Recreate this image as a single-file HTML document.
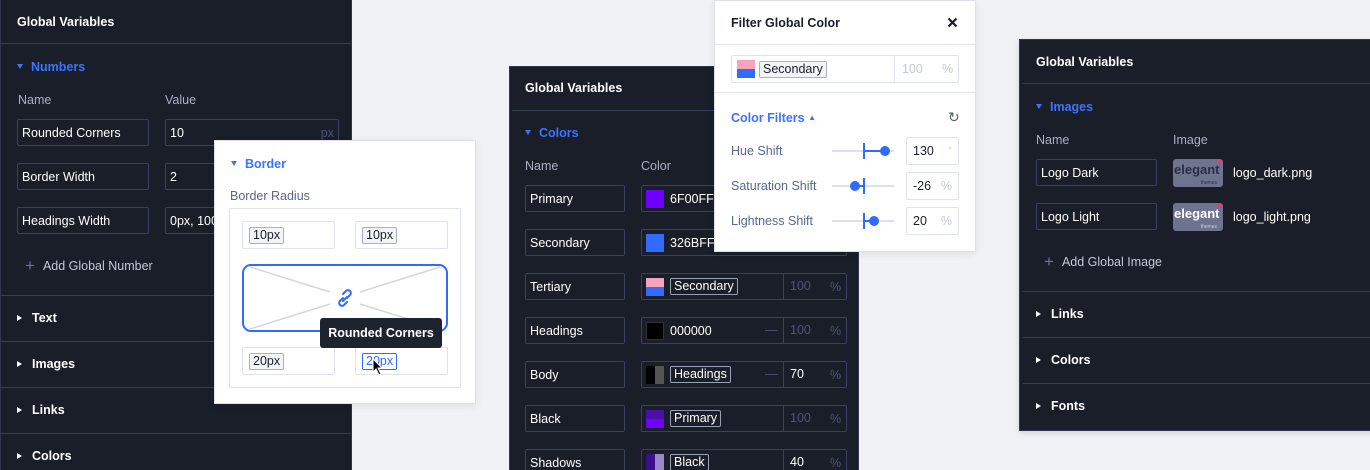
<!DOCTYPE html>
<html style="overflow:hidden;height:470px"><head><meta charset="utf-8"><style>
*{box-sizing:border-box;margin:0;padding:0}
body{width:1370px;height:470px;background:#f1f2f5;position:relative;overflow:hidden;font-family:"Liberation Sans",sans-serif;font-size:13px}
.a{position:absolute}
.dark{background:#1a1e29;border:1px solid #30364b}
.hd{color:#fff;font-weight:bold;font-size:12.5px;white-space:nowrap}
.ln{height:1px;background:#363d58}
.blue{color:#3b74ff;font-weight:bold;font-size:12.5px;white-space:nowrap}
.lab{color:#aab0c4;font-size:12.5px;white-space:nowrap}
.inp{border:1px solid #3a4160;border-radius:2px;color:#fff;font-size:12.5px;padding-left:4px;display:flex;align-items:center;white-space:nowrap;overflow:hidden}
.sec{color:#fff;font-size:12.5px;font-weight:bold;white-space:nowrap}
.tri{display:inline-block;width:0;height:0;border-top:3.5px solid transparent;border-bottom:3.5px solid transparent;border-left:5px solid #fff;margin-right:10px;vertical-align:1px}
.trd{display:inline-block;width:0;height:0;border-left:3.5px solid transparent;border-right:3.5px solid transparent;border-top:5px solid #3b74ff;margin-right:8px;vertical-align:2px}
.sw{width:18px;height:18px;margin-right:6px;flex:none}
.tag{border:1px solid #9aa0b4;border-radius:2px;padding:0 3px;line-height:15px}
.mut{color:#4d5574}
.w{background:#fff;border:1px solid #dde0e8}
.lg{color:#5b6690;font-size:12.5px;white-space:nowrap}
.wi{border:1px solid #dfe2ea;border-radius:2px;background:#fff;display:flex;align-items:center;padding-left:6px;font-size:12.5px;color:#1a1e29}
</style></head><body>

<!-- LEFT PANEL -->
<div class="a dark" style="left:0;top:-2px;width:352px;height:474px"></div>
<div class="a hd" style="left:17px;top:15px">Global Variables</div>
<div class="a ln" style="left:0;top:43px;width:351px"></div>
<div class="a blue" style="left:17px;top:60px"><span class="trd"></span>Numbers</div>
<div class="a lab" style="left:18px;top:93px">Name</div>
<div class="a lab" style="left:165px;top:93px">Value</div>
<div class="a inp" style="left:17px;top:119px;width:132px;height:27px">Rounded Corners</div>
<div class="a inp" style="left:165px;top:119px;width:174px;height:27px">10<span style="margin-left:auto;margin-right:4px;color:#4d5574">px</span></div>
<div class="a inp" style="left:17px;top:163px;width:132px;height:27px">Border Width</div>
<div class="a inp" style="left:165px;top:163px;width:174px;height:27px">2</div>
<div class="a inp" style="left:17px;top:207px;width:132px;height:27px">Headings Width</div>
<div class="a inp" style="left:165px;top:207px;width:174px;height:27px">0px, 100</div>
<div class="a lab" style="left:25px;top:256px;color:#c3c8d8"><span style="color:#6a7499;font-size:17px;margin-right:8px;vertical-align:-1px">+</span>Add Global Number</div>
<div class="a ln" style="left:0;top:295px;width:351px"></div>
<div class="a sec" style="left:17px;top:311px"><span class="tri"></span>Text</div>
<div class="a ln" style="left:0;top:341px;width:351px"></div>
<div class="a sec" style="left:17px;top:357px"><span class="tri"></span>Images</div>
<div class="a ln" style="left:0;top:387px;width:351px"></div>
<div class="a sec" style="left:17px;top:403px"><span class="tri"></span>Links</div>
<div class="a ln" style="left:0;top:433px;width:351px"></div>
<div class="a sec" style="left:17px;top:449px"><span class="tri"></span>Colors</div>

<!-- BORDER POPUP -->
<div class="a w" style="left:214px;top:140px;width:262px;height:264px;box-shadow:0 2px 8px rgba(0,0,0,.08)"></div>
<div class="a blue" style="left:231px;top:157px"><span class="trd"></span>Border</div>
<div class="a lg" style="left:230px;top:189px">Border Radius</div>
<div class="a" style="left:229px;top:208px;width:232px;height:180px;border:1px solid #dfe2ea;border-radius:2px"></div>
<div class="a wi" style="left:242px;top:221px;width:93px;height:28px"><span class="tag" style="border-color:#aab0c0;background:#f3f4f7">10px</span></div>
<div class="a wi" style="left:355px;top:221px;width:93px;height:28px"><span class="tag" style="border-color:#aab0c0;background:#f3f4f7">10px</span></div>
<svg class="a" style="left:242px;top:264px" width="206" height="68">
<rect x="1" y="1" width="204" height="66" rx="8" fill="#fff" stroke="#2f6bff" stroke-width="2"/>
<line x1="8" y1="3" x2="88" y2="28" stroke="#d3d6de" stroke-width="1.5"/>
<line x1="198" y1="3" x2="118" y2="28" stroke="#d3d6de" stroke-width="1.5"/>
<line x1="8" y1="65" x2="88" y2="40" stroke="#d3d6de" stroke-width="1.5"/>
<line x1="198" y1="65" x2="118" y2="40" stroke="#d3d6de" stroke-width="1.5"/>
<g fill="none" stroke="#2f6bff" stroke-width="2" stroke-linecap="round">
<path d="M101 30 l3 -3 a2.8 2.8 0 0 1 4 4 l-3 3"/>
<path d="M105 38 l-3 3 a2.8 2.8 0 0 1 -4 -4 l3 -3"/>
<path d="M101 37 l4 -4"/>
</g>
</svg>
<div class="a wi" style="left:242px;top:347px;width:93px;height:28px"><span class="tag" style="border-color:#aab0c0;background:#f3f4f7">20px</span></div>
<div class="a wi" style="left:355px;top:347px;width:93px;height:28px"><span class="tag" style="border-color:#2f6bff;color:#2f6bff">20px</span></div>
<div class="a" style="left:320px;top:318px;width:122px;height:30px;background:#1e2330;border-radius:3px;color:#fff;font-size:12.5px;font-weight:bold;display:flex;align-items:center;justify-content:center">Rounded Corners</div>
<svg class="a" style="left:372px;top:358px" width="12" height="18"><path d="M1 1 L1 14 L4 11 L7 17 L9 16 L6 10 L10 10 Z" fill="#000" stroke="#fff" stroke-width="1"/></svg>

<!-- MIDDLE PANEL -->
<div class="a dark" style="left:509px;top:66px;width:350px;height:406px"></div>
<div class="a hd" style="left:525px;top:81px">Global Variables</div>
<div class="a ln" style="left:512px;top:110px;width:346px"></div>
<div class="a blue" style="left:525px;top:126px"><span class="trd"></span>Colors</div>
<div class="a lab" style="left:525px;top:159px">Name</div>
<div class="a lab" style="left:641px;top:159px">Color</div>

<div class="a inp" style="left:525px;top:185px;width:100px;height:27px">Primary</div>
<div class="a inp" style="left:641px;top:185px;width:206px;height:27px"><div class="sw" style="background:#6f00ff"></div>6F00FF</div>
<div class="a inp" style="left:525px;top:229px;width:100px;height:27px">Secondary</div>
<div class="a inp" style="left:641px;top:229px;width:206px;height:27px"><div class="sw" style="background:#326bff"></div>326BFF</div>

<div class="a inp" style="left:525px;top:273px;width:100px;height:27px">Tertiary</div>
<div class="a inp" style="left:641px;top:273px;width:206px;height:27px"><div class="sw" style="background:linear-gradient(#f7a3bd 50%,#326bff 50%)"></div><span class="tag">Secondary</span><span class="a mut" style="left:141px;top:0;height:25px;border-left:1px solid #3a4160;padding-left:6px;line-height:25px">100</span><span class="a mut" style="left:188px;top:6px">%</span></div>
<div class="a inp" style="left:525px;top:317px;width:100px;height:27px">Headings</div>
<div class="a inp" style="left:641px;top:317px;width:206px;height:27px"><div class="sw" style="background:#000;border:1px solid #333"></div>000000<span class="a mut" style="left:123px;top:5px">—</span><span class="a mut" style="left:141px;top:0;height:25px;border-left:1px solid #3a4160;padding-left:6px;line-height:25px">100</span><span class="a mut" style="left:188px;top:6px">%</span></div>
<div class="a inp" style="left:525px;top:361px;width:100px;height:27px">Body</div>
<div class="a inp" style="left:641px;top:361px;width:206px;height:27px"><div class="sw" style="background:linear-gradient(90deg,#000 50%,#555 50%)"></div><span class="tag">Headings</span><span class="a mut" style="left:123px;top:5px">—</span><span class="a" style="left:141px;top:0;height:25px;border-left:1px solid #3a4160;padding-left:6px;line-height:25px;color:#fff">70</span><span class="a mut" style="left:188px;top:6px">%</span></div>
<div class="a inp" style="left:525px;top:405px;width:100px;height:27px">Black</div>
<div class="a inp" style="left:641px;top:405px;width:206px;height:27px"><div class="sw" style="background:linear-gradient(#4a10a8 50%,#6f00ff 50%)"></div><span class="tag">Primary</span><span class="a mut" style="left:141px;top:0;height:25px;border-left:1px solid #3a4160;padding-left:6px;line-height:25px">100</span><span class="a mut" style="left:188px;top:6px">%</span></div>
<div class="a inp" style="left:525px;top:449px;width:100px;height:27px">Shadows</div>
<div class="a inp" style="left:641px;top:449px;width:206px;height:27px"><div class="sw" style="background:linear-gradient(90deg,#3b0f8c 50%,#9a88c8 50%)"></div><span class="tag">Black</span><span class="a" style="left:141px;top:0;height:25px;border-left:1px solid #3a4160;padding-left:6px;line-height:25px;color:#fff">40</span><span class="a mut" style="left:188px;top:6px">%</span></div>

<!-- FILTER POPUP -->
<div class="a w" style="left:714px;top:0;width:262px;height:252px;box-shadow:0 2px 8px rgba(0,0,0,.08)"></div>
<div class="a" style="left:731px;top:16px;font-weight:bold;font-size:12.5px;color:#1a1e29">Filter Global Color</div>
<svg class="a" style="left:947px;top:17px" width="11" height="11"><path d="M1.5 1.5 L9.5 9.5 M9.5 1.5 L1.5 9.5" stroke="#1a1e29" stroke-width="2.2"/></svg>
<div class="a" style="left:715px;top:44px;width:260px;height:1px;background:#e3e5ec"></div>
<div class="a wi" style="left:731px;top:55px;width:228px;height:28px;padding-left:5px"><div class="sw" style="background:linear-gradient(#f7a3bd 50%,#326bff 50%);margin-right:4px"></div><span class="tag" style="border-color:#aab0c0;background:#f3f4f7;width:68px">Secondary</span><span class="a" style="left:162px;top:0;height:26px;border-left:1px solid #e3e5ec;padding-left:7px;line-height:26px;color:#c3c8d6">100</span><span class="a" style="left:210px;top:6px;color:#c3c8d6">%</span></div>
<div class="a" style="left:715px;top:92px;width:260px;height:1px;background:#e3e5ec"></div>
<div class="a blue" style="left:731px;top:111px">Color Filters <span style="font-size:8px;vertical-align:2px">▲</span></div>
<div class="a" style="left:948px;top:109px;font-size:14px;color:#555c70">↻</div>
<div class="a lg" style="left:731px;top:144px">Hue Shift</div>
<div class="a lg" style="left:731px;top:179px">Saturation Shift</div>
<div class="a lg" style="left:731px;top:214px">Lightness Shift</div>
<svg class="a" style="left:830px;top:140px" width="66" height="90">
<g stroke="#d3d6e0" stroke-width="1.5"><line x1="2" y1="11" x2="64" y2="11"/><line x1="2" y1="46" x2="64" y2="46"/><line x1="2" y1="81" x2="64" y2="81"/></g>
<g stroke="#2f6bff" stroke-width="2" fill="#2f6bff">
<line x1="34" y1="3" x2="34" y2="19"/><line x1="34" y1="11" x2="54" y2="11"/><circle cx="55" cy="11" r="5" stroke="none"/>
<line x1="34" y1="38" x2="34" y2="54"/><line x1="34" y1="46" x2="25" y2="46"/><circle cx="25" cy="46" r="5" stroke="none"/>
<line x1="34" y1="73" x2="34" y2="89"/><line x1="34" y1="81" x2="44" y2="81"/><circle cx="44" cy="81" r="5" stroke="none"/>
</g></svg>
<div class="a wi" style="left:906px;top:137px;width:53px;height:28px">130<span style="margin-left:auto;margin-right:6px;color:#c3c8d6;font-size:10px">°</span></div>
<div class="a wi" style="left:906px;top:172px;width:53px;height:28px">-26<span style="margin-left:auto;margin-right:6px;color:#c3c8d6">%</span></div>
<div class="a wi" style="left:906px;top:207px;width:53px;height:28px">20<span style="margin-left:auto;margin-right:6px;color:#c3c8d6">%</span></div>

<!-- RIGHT PANEL -->
<div class="a dark" style="left:1019px;top:39px;width:360px;height:392px;box-shadow:0 2px 6px rgba(0,0,0,.15)"></div>
<div class="a hd" style="left:1036px;top:55px">Global Variables</div>
<div class="a ln" style="left:1023px;top:83px;width:347px"></div>
<div class="a blue" style="left:1036px;top:100px"><span class="trd"></span>Images</div>
<div class="a lab" style="left:1036px;top:133px">Name</div>
<div class="a lab" style="left:1173px;top:133px">Image</div>
<div class="a inp" style="left:1036px;top:159px;width:121px;height:27px">Logo Dark</div>
<div class="a inp" style="left:1036px;top:203px;width:121px;height:27px">Logo Light</div>
<div class="a" style="left:1173px;top:159px;width:50px;height:28px;background:#6e7490;border-radius:3px;overflow:hidden;color:#2a2f40;font-weight:bold;font-size:13px;line-height:22px;padding-left:1px">elegant<div style="font-size:5px;line-height:4px;text-align:right;padding-right:6px;font-weight:normal">themes</div><span class="a" style="right:1px;top:1px;width:4px;height:4px;background:#ff2d6f;border-radius:50%"></span></div>
<div class="a" style="left:1173px;top:203px;width:50px;height:28px;background:#6e7490;border-radius:3px;overflow:hidden;color:#fff;font-weight:bold;font-size:13px;line-height:22px;padding-left:1px">elegant<div style="font-size:5px;line-height:4px;text-align:right;padding-right:6px;font-weight:normal;color:#ccc">themes</div><span class="a" style="right:1px;top:1px;width:4px;height:4px;background:#ff2d6f;border-radius:50%"></span></div>
<div class="a" style="left:1233px;top:166px;color:#fff;font-size:12.5px">logo_dark.png</div>
<div class="a" style="left:1233px;top:210px;color:#fff;font-size:12.5px">logo_light.png</div>
<div class="a lab" style="left:1044px;top:252px;color:#c3c8d8"><span style="color:#6a7499;font-size:17px;margin-right:8px;vertical-align:-1px">+</span>Add Global Image</div>
<div class="a ln" style="left:1023px;top:291px;width:347px"></div>
<div class="a sec" style="left:1036px;top:307px"><span class="tri"></span>Links</div>
<div class="a ln" style="left:1023px;top:337px;width:347px"></div>
<div class="a sec" style="left:1036px;top:353px"><span class="tri"></span>Colors</div>
<div class="a ln" style="left:1023px;top:383px;width:347px"></div>
<div class="a sec" style="left:1036px;top:399px"><span class="tri"></span>Fonts</div>
</body></html>
